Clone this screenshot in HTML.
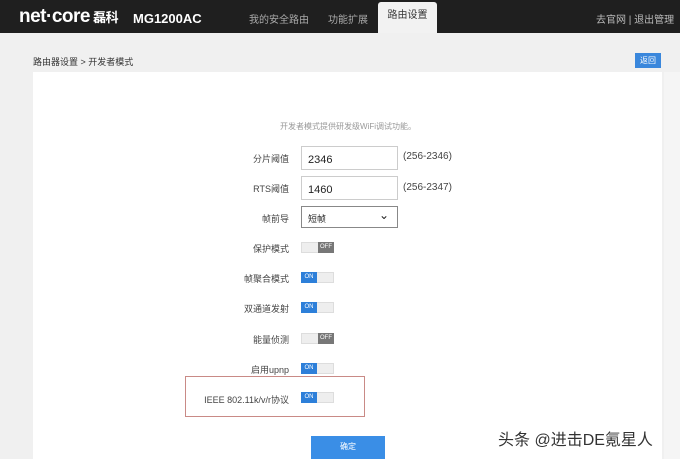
<!DOCTYPE html>
<html><head><meta charset="utf-8"><style>
*{margin:0;padding:0;box-sizing:border-box}
html,body{width:680px;height:459px;overflow:hidden}
body{background:#f0f0f0;font-family:"Liberation Sans","Noto Sans CJK SC",sans-serif;position:relative;color:#333}
.hd{position:absolute;left:0;top:0;width:680px;height:33px;background:#1f1f1f}
.logo{position:absolute;left:19px;top:6px;color:#fff;font-weight:bold;font-size:19px;letter-spacing:-0.5px;white-space:nowrap}
.model{position:absolute;left:133px;top:11px;color:#fff;font-weight:bold;font-size:13px}
.nav{position:absolute;top:11px;color:#aaa;font-size:10px;white-space:nowrap}
.tab{position:absolute;left:378px;top:2px;width:59px;height:31px;background:#f2f2f2;border-radius:3px 3px 0 0;font-size:10px;color:#333;text-align:center;line-height:27px}
.abs{position:absolute}
.card{position:absolute;left:33px;top:72px;width:629px;height:387px;background:#fff}
.lbl{position:absolute;right:391px;font-size:9px;color:#444;text-align:right;white-space:nowrap}
.inp{position:absolute;left:301px;width:97px;height:24px;border:1px solid #ccc;font-size:11px;padding:7px 0 0 6px;color:#222}
.rng{position:absolute;left:403px;font-size:10px;color:#444}
.tg{position:absolute;left:301px;width:33px;height:11px;background:#eee;border:1px solid #ddd}
.tg span{position:absolute;top:-1px;height:11px;width:16px;font-size:6px;color:#fff;text-align:center;line-height:11px}
.on span{left:-1px;background:#2d7fd9}
.off span{right:-1px;background:#777}
</style></head><body>
<div class="hd">
<div class="logo">net·core<span style="font-size:13px"> 磊科</span></div>
<div class="model">MG1200AC</div>
<div class="nav" style="left:249px">我的安全路由</div>
<div class="nav" style="left:328px">功能扩展</div>
<div class="tab">路由设置</div>
<div class="nav" style="left:596px;color:#bbb">去官网 | 退出管理</div>
</div>
<div class="abs" style="left:33px;top:55px;font-size:9px;color:#333">路由器设置 &gt; 开发者模式</div>
<div class="abs" style="left:635px;top:53px;width:26px;height:15px;background:#3a87dc;color:#fff;font-size:8px;text-align:center;line-height:15px">返回</div>
<div class="card"></div>
<div class="abs" style="left:664px;top:72px;width:16px;height:387px;background:#f5f5f5"></div>
<div class="abs" style="left:280px;top:121px;font-size:8px;color:#999">开发者模式提供研发级WiFi调试功能。</div>
<div class="lbl" style="top:152px">分片阈值</div>
<div class="inp" style="top:146px">2346</div><div class="rng" style="top:151px">(256-2346)</div>
<div class="lbl" style="top:182px">RTS阈值</div>
<div class="inp" style="top:176px">1460</div><div class="rng" style="top:182px">(256-2347)</div>
<div class="lbl" style="top:212px">帧前导</div>
<div class="inp" style="top:206px;height:22px;border-color:#888;font-size:9px;padding-top:5px">短帧<span style="position:absolute;right:8px;top:1px;font-size:12px">⌄</span></div>
<div class="lbl" style="top:242px">保护模式</div><div class="tg off" style="top:242px"><span>OFF</span></div>
<div class="lbl" style="top:272px">帧聚合模式</div><div class="tg on" style="top:272px"><span>ON</span></div>
<div class="lbl" style="top:302px">双通道发射</div><div class="tg on" style="top:302px"><span>ON</span></div>
<div class="lbl" style="top:333px">能量侦测</div><div class="tg off" style="top:333px"><span>OFF</span></div>
<div class="lbl" style="top:363px">启用upnp</div><div class="tg on" style="top:363px"><span>ON</span></div>
<div class="abs" style="left:185px;top:376px;width:180px;height:41px;border:1px solid #c98a86"></div>
<div class="lbl" style="top:393px">IEEE 802.11k/v/r协议</div><div class="tg on" style="top:392px"><span>ON</span></div>
<div class="abs" style="left:311px;top:436px;width:74px;height:23px;background:#3a8ee6;color:#fff;font-size:8px;text-align:center;line-height:22px">确定</div>
<div class="abs" style="left:498px;top:426px;font-size:16px;color:#333;white-space:nowrap">头条 @进击DE氪星人</div>
</body></html>
